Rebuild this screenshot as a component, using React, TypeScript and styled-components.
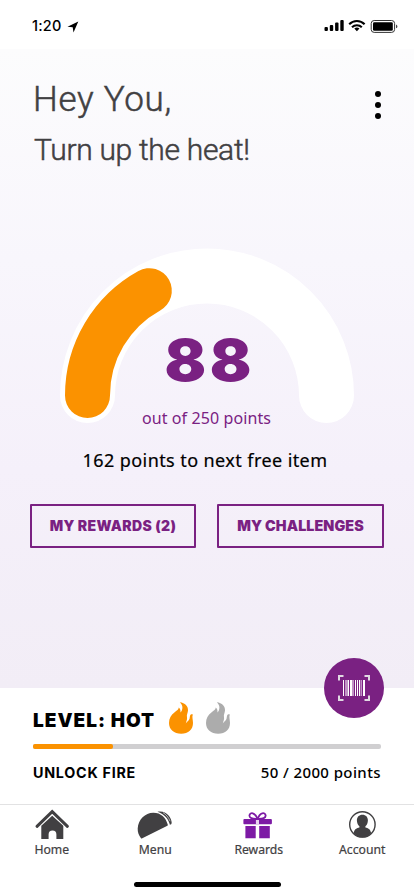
import React from 'react';
import styled, { createGlobalStyle } from 'styled-components';

const PURPLE = '#7a2182';
const ORANGE = '#fb9200';
const INK = '#414042';

const GlobalStyle = createGlobalStyle`
  * { box-sizing: border-box; }
  body { margin: 0; background: #fff; }
`;

const Screen = styled.div`
  width: 414px;
  height: 896px;
  display: flex;
  flex-direction: column;
  overflow: hidden;
  background: #fff;
  color: #000;
  font-family: 'Noto Sans', Roboto, sans-serif;
  white-space: nowrap;
`;

const StatusBar = styled.header`
  height: 49px;
  flex: none;
  display: flex;
  justify-content: space-between;
  align-items: flex-start;
  padding: 16px 16px 0 32px;
`;

const Clock = styled.div`
  display: flex;
  gap: 5px;
  font: 500 14.5px/20px Inter, sans-serif;
  letter-spacing: 0.2px;
`;

const Hero = styled.main`
  height: 639px;
  flex: none;
  display: flex;
  flex-direction: column;
  background: linear-gradient(#fcfcfd 0%, #f8f6fc 33%, #f5f0fa 66%, #f2edf6 100%);
`;

const Heading = styled.div`
  height: 199px;
  display: flex;
  justify-content: space-between;
  padding: 31px 32px 0 33px;
  color: ${INK};
  font-family: Roboto, sans-serif;
`;

const Greeting = styled.h1`
  margin: 0;
  font-size: 35px;
  line-height: 40px;
  font-weight: 300;
  letter-spacing: 0.7px;
  -webkit-text-stroke: 0.5px ${INK};
`;

const Tagline = styled.p`
  margin: 12px 0 0 1px;
  font-size: 30px;
  line-height: 36px;
  font-weight: 300;
  letter-spacing: -0.3px;
  -webkit-text-stroke: 0.5px ${INK};
`;

const MenuDots = styled.button`
  display: grid;
  gap: 5px;
  align-content: start;
  margin: 11px 0 0;
  padding: 0;
  border: 0;
  background: none;
  height: 28px;
`;

const Dot = styled.i`
  width: 6px;
  height: 6px;
  border-radius: 50%;
  background: #000;
  margin-right: 1px;
`;

const Gauge = styled.section`
  display: grid;
  width: 294px;
  height: 200px;
  margin-left: 60px;
  color: ${PURPLE};
  > * { grid-area: 1 / 1; }
`;

const GaugeText = styled.div`
  display: flex;
  flex-direction: column;
  align-items: center;
  padding-top: 82px;
`;

const Score = styled.strong`
  font: 900 58px/60px Inter, sans-serif;
  transform: scaleX(1.06);
  letter-spacing: 3.5px;
  margin-left: 5px;
`;

const OutOf = styled.span`
  margin: 18px 1px 0 0;
  font-size: 16px;
  line-height: 20px;
  letter-spacing: 0.1px;
`;

const NextItem = styled.p`
  margin: 0 4px 0 0;
  text-align: center;
  font-size: 18px;
  line-height: 24px;
  letter-spacing: 0.42px;
  -webkit-text-stroke: 0.2px #000;
`;

const Actions = styled.div`
  display: grid;
  grid-template-columns: 166px 167px;
  gap: 21px;
  margin: 32px 0 0 30px;
`;

const ActionButton = styled.button<{ $size: number; $spacing: number }>`
  height: 44px;
  border: 2px solid ${PURPLE};
  border-radius: 1px;
  background: transparent;
  color: ${PURPLE};
  padding: 0;
  font: 900 ${(p) => p.$size}px/20px Inter, sans-serif;
  letter-spacing: ${(p) => p.$spacing}px;
`;

const LevelPanel = styled.section`
  position: relative;
  height: 116px;
  flex: none;
  padding: 14px 33px 0;
`;

const ScanButton = styled.button`
  position: absolute;
  right: 30px;
  top: -30px;
  width: 60px;
  height: 60px;
  border: 0;
  padding: 0;
  border-radius: 50%;
  background: ${PURPLE};
  display: grid;
  place-items: center;
`;

const LevelRow = styled.div`
  display: flex;
  height: 32px;
  align-items: flex-start;
`;

const LevelName = styled.h2`
  width: 136px;
  margin: 7px 0 0;
  font: 900 19px/24px Inter, sans-serif;
  letter-spacing: 1px;
`;

const Flame = styled.svg`
  margin-right: 13px;
  flex: none;
`;

const Track = styled.div`
  height: 5px;
  margin-top: 10px;
  border-radius: 2px;
  background: #d0cfd1;
`;

const Fill = styled.div`
  height: 5px;
  border-radius: 2px;
  background: ${ORANGE};
`;

const ProgressRow = styled.div`
  display: flex;
  justify-content: space-between;
  margin-top: 14px;
  line-height: 20px;
`;

const Unlock = styled.span`
  font-family: Inter, sans-serif;
  font-weight: 700;
  font-size: 14.3px;
  letter-spacing: 0.75px;
`;

const Points = styled.span`
  margin-top: -1px;
  font-size: 15px;
  font-weight: 500;
  letter-spacing: 0.4px;
`;

const TabBar = styled.nav`
  height: 77px;
  flex: none;
  display: grid;
  grid-template-columns: repeat(4, 1fr);
  border-top: 1px solid #e2e2e3;
`;

const Tab = styled.div`
  display: flex;
  flex-direction: column;
  align-items: center;
  gap: 2px;
  padding-top: 3px;
  color: ${INK};
  font-size: 12.2px;
  line-height: 16px;
  -webkit-text-stroke: 0.2px ${INK};
`;

const HomeIndicator = styled.div`
  width: 147px;
  height: 5px;
  margin: 1px 0 0 134px;
  border-radius: 3px;
  background: #000;
`;

const flamePath =
  'M10.8 0.2C16 0.6 19.4 4.4 19 8.6C18.8 11.2 17.4 13 18 15.2C18.4 17 17.4 19 16.8 21.4C18.2 19.4 20.2 18.6 20.6 16.6C20.9 14.8 20.8 13.6 21.8 12.6C22.4 12.1 23.2 12.2 23.8 12.4C22.8 15.2 24 17.6 24 21C24 27.5 19.4 31.8 12.2 31.8C5 31.8 0 27.5 0 21C0 16.4 2 13 5.4 10.4C8.8 8 9.4 7.4 9.8 5.6C11.2 7 11.8 8.6 11.4 10.6C14.2 7.6 14.2 3 10.8 0.2Z';

const FlameIcon = ({ color }: { color: string }) => (
  <Flame width="24" height="32" viewBox="0 0 24 32">
    <path d={flamePath} fill={color} />
  </Flame>
);

const tabs = [
  {
    label: 'Home',
    icon: (
      <>
        <path d="M3 18.3L18.2 3.6L33.4 18.3" fill="none" stroke={INK} strokeWidth="3" strokeLinecap="round" />
        <path fill={INK} d="M18.2 7.7L29.3 17.8V31H22.4V26.4A3.9 3.9 0 0 0 14.6 26.4V31H7.3V17.8Z" />
      </>
    ),
  },
  {
    label: 'Menu',
    icon: (
      <>
        <path fill={INK} d="M4 30.2C1.9 27.4 .5 24.6 .7 20.6C1.2 11.5 8.1 4.7 16.3 4.7C24 4.7 28.8 9.4 30.8 16.8Q31 17.4 30.4 17.7L4.8 30.4Q4.3 30.6 4 30.2Z" />
        <path fill={INK} d="M20.5 3.7C28.3 1.8 34.7 8.6 34.7 15Q34.6 16.7 32.9 16.8C31.7 11.2 27.4 5.9 20.5 3.7Z" />
        <path fill="none" stroke="#fff" strokeWidth="0.6" d="M26 4.6C29 6.4 31.5 9.2 33.1 13.2" />
      </>
    ),
  },
  {
    label: 'Rewards',
    icon: (
      <g fill="#7d1aa5">
        <path d="M3.4 11.1H29.9Q30.9 11.1 30.9 12V15.3Q30.9 16.2 29.9 16.2H3.2Q2.4 16.2 2.4 15.3V12Q2.4 11.1 3.4 11.1Z" />
        <path d="M4.4 18.1H14.7V30.3H4.4ZM18.2 18.1H28.8V30.3H18.2Z" />
        <path d="M16.5 11C11 11.2 8.1 9.8 8.5 7.2C9.1 4 14 4 16.5 11C19 4 24 4 24.6 7.2C25 9.8 22 11.2 16.5 11Z" fill="#fff" stroke="#7d1aa5" strokeWidth="1.8" />
        <path d="M14.9 12H18V16.3H14.9Z" fill="#e8d4ef" />
      </g>
    ),
  },
  {
    label: 'Account',
    icon: (
      <>
        <circle cx="18.4" cy="16.4" r="12.7" fill="none" stroke={INK} strokeWidth="1.4" />
        <path fill={INK} d="M18.4 6.7C21.8 6.7 24 9 23.9 12.5C23.8 15 22.9 17.2 21.4 18.2V19.6C24 20.3 26.3 20.8 27.2 25.3C24.8 28.1 22 29.4 18.4 29.4S12 28.1 9.6 25.3C10.5 20.8 12.8 20.3 15.4 19.6V18.2C13.9 17.2 13 15 12.9 12.5C12.8 9 15 6.7 18.4 6.7Z" />
      </>
    ),
  },
];

const level = { points: 80, span: 348 };

export default function App() {
  return (
    <>
      <GlobalStyle />
      <Screen>
        <StatusBar>
          <Clock>
            1:20
            <svg width="12" height="18" viewBox="0 0 12 18">
              <path d="M11.3 5.5L0.5 10.8L5.7 11.3L6.5 16.4Z" />
            </svg>
          </Clock>
          <svg width="74" height="20" viewBox="324 16 74 20">
            <rect x="324.5" y="27" width="3.4" height="4" rx="1" />
            <rect x="329.8" y="25" width="3.4" height="6" rx="1" />
            <rect x="335.1" y="22.6" width="3.4" height="8.4" rx="1" />
            <rect x="340.3" y="20" width="3.4" height="11" rx="1" />
            <g fill="none" stroke="#000" strokeWidth="2.1">
              <path d="M349.2 24.3A10.8 10.8 0 0 1 364.6 24.3" />
              <path d="M352 27.2A7 7 0 0 1 361.8 27.2" />
            </g>
            <path d="M354.3 28.5Q356.9 26.6 359.5 28.5L356.9 31.2Z" />
            <rect x="371.2" y="20.5" width="23.4" height="11.9" rx="3" fill="none" stroke="#333" />
            <rect x="373" y="22.2" width="19.8" height="8.5" rx="1.3" />
            <path d="M396 24.6Q397.4 25 397.4 26.4T396 28.3Z" fill="#444" />
          </svg>
        </StatusBar>

        <Hero>
          <Heading>
            <div>
              <Greeting>Hey You,</Greeting>
              <Tagline>Turn up the heat!</Tagline>
            </div>
            <MenuDots aria-label="More">
              <Dot />
              <Dot />
              <Dot />
            </MenuDots>
          </Heading>

          <Gauge>
            <svg width="294" height="176" viewBox="60 248 294 176" fill="none" strokeLinecap="round">
              <path d="M87.5 395.5A119.5 119.5 0 0 1 326.5 395.5" stroke="#fff" strokeWidth="55" />
              <path d="M87.5 395.5A119.5 119.5 0 0 1 149.3 290.7" stroke={ORANGE} strokeWidth="45" />
            </svg>
            <GaugeText>
              <Score>88</Score>
              <OutOf>out of 250 points</OutOf>
            </GaugeText>
          </Gauge>

          <NextItem>162 points to next free item</NextItem>

          <Actions>
            <ActionButton $size={14} $spacing={0.35}>MY REWARDS (2)</ActionButton>
            <ActionButton $size={14.3} $spacing={0.1}>MY CHALLENGES</ActionButton>
          </Actions>
        </Hero>

        <LevelPanel>
          <ScanButton aria-label="Scan">
            <svg width="32" height="26" viewBox="0 0 32 26">
              <path d="M1 5.5V1H5.5M26.5 1H31V5.5M31 20.5V25H26.5M5.5 25H1V20.5" fill="none" stroke="#e0d9e2" strokeWidth="2" />
              <path d="M5 5h1v16H5zM12 5h2v16h-2zM17 5h1v16h-1zM19 5h1v16h-1zM21 5h1v16h-1zM25 5h2v16h-2zM10 5h1v16h-1z" fill="#fff" />
              <path d="M7 5h2v16H7zM14 5h2v16h-2zM22.5 5h1.5v16h-1.5zM9 5h1v16H9z" fill="#c193c6" />
            </svg>
          </ScanButton>
          <LevelRow>
            <LevelName>LEVEL: HOT</LevelName>
            <FlameIcon color={ORANGE} />
            <FlameIcon color="#acacac" />
          </LevelRow>
          <Track>
            <Fill style={{ width: `${(level.points / level.span) * 100}%` }} />
          </Track>
          <ProgressRow>
            <Unlock>UNLOCK FIRE</Unlock>
            <Points>50 / 2000 points</Points>
          </ProgressRow>
        </LevelPanel>

        <TabBar>
          {tabs.map((tab) => (
            <Tab key={tab.label}>
              <svg width="36" height="32" viewBox="0 0 36 32">{tab.icon}</svg>
              {tab.label}
            </Tab>
          ))}
        </TabBar>
        <HomeIndicator />
      </Screen>
    </>
  );
}
